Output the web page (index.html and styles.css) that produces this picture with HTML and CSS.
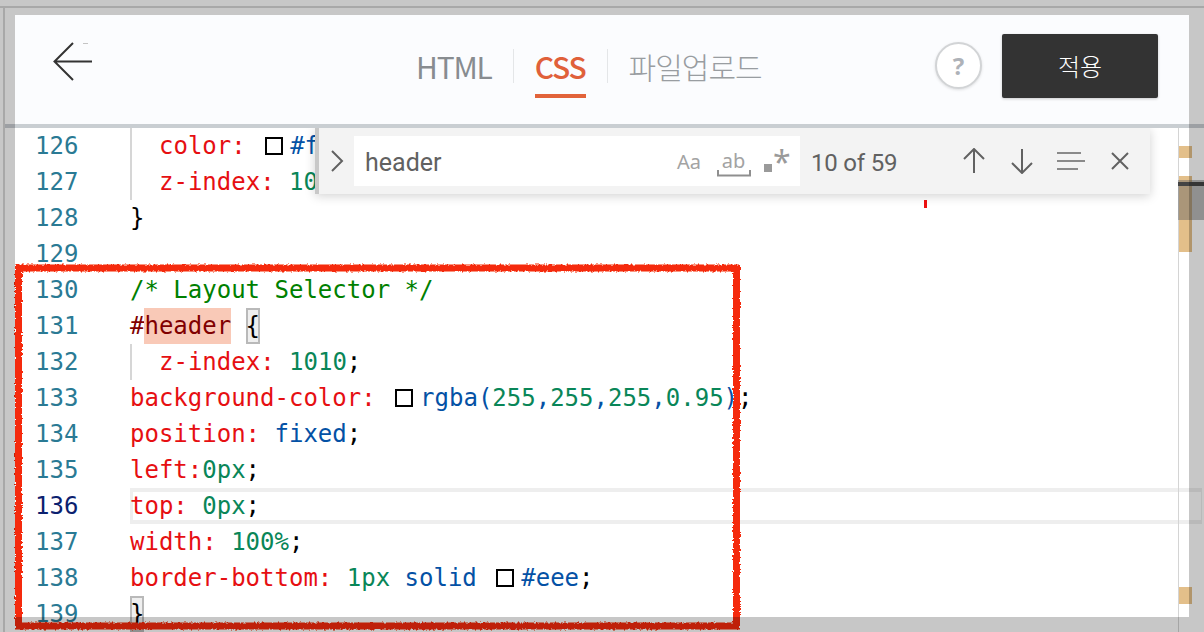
FILE: index.html
```html
<!DOCTYPE html>
<html lang="ko">
<head>
<meta charset="utf-8">
<title>CSS editor</title>
<link rel="stylesheet" href="styles.css">
</head>
<body>
<div class="stage">
  <header class="topbar">
    <button class="back" aria-label="back">
      <svg width="40" height="40" viewBox="0 0 40 40"><path class="back-path" d="M20 1 L1.5 19.5 L20 38 M1.5 19.5 H39"/></svg>
    </button>
    <nav class="tabs">
      <span class="tab">HTML</span>
      <span class="tab-sep"></span>
      <span class="tab tab-active">CSS</span>
      <span class="tab-sep"></span>
      <span class="tab tab-ko">파일업로드</span>
    </nav>
    <div class="actions">
      <span class="help">?</span>
      <button class="apply">적용</button>
    </div>
  </header>

  <main class="editor">
    <div class="row"><span class="ln">126</span><code class="code"><i class="indent"></i><b class="p">color:</b> <i class="swatch"></i><b class="v">#fff</b>;</code></div>
    <div class="row"><span class="ln">127</span><code class="code"><i class="indent"></i><b class="p">z-index:</b> <b class="n">1000</b>;</code></div>
    <div class="row"><span class="ln">128</span><code class="code">}</code></div>
    <div class="row"><span class="ln">129</span><code class="code"></code></div>
    <div class="row"><span class="ln">130</span><code class="code"><b class="c">/* Layout Selector */</b></code></div>
    <div class="row"><span class="ln">131</span><code class="code"><b class="s">#<mark class="hit">header</mark></b> <span class="match">{</span></code></div>
    <div class="row"><span class="ln">132</span><code class="code"><i class="indent"></i><b class="p">z-index:</b> <b class="n">1010</b>;</code></div>
    <div class="row"><span class="ln">133</span><code class="code"><b class="p">background-color:</b> <i class="swatch"></i><b class="v">rgba(<b class="n">255</b>,<b class="n">255</b>,<b class="n">255</b>,<b class="n">0.95</b>)</b>;</code></div>
    <div class="row"><span class="ln">134</span><code class="code"><b class="p">position:</b> <b class="v">fixed</b>;</code></div>
    <div class="row"><span class="ln">135</span><code class="code"><b class="p">left:</b><b class="n">0px</b>;</code></div>
    <div class="row row-current"><span class="ln">136</span><code class="code"><b class="p">top:</b> <b class="n">0px</b>;</code></div>
    <div class="row"><span class="ln">137</span><code class="code"><b class="p">width:</b> <b class="n">100%</b>;</code></div>
    <div class="row"><span class="ln">138</span><code class="code"><b class="p">border-bottom:</b> <b class="n">1px</b> <b class="v">solid</b> <i class="swatch"></i><b class="v">#eee</b>;</code></div>
    <div class="row"><span class="ln">139</span><code class="code"><span class="match match-end">}</span></code></div>
  </main>

  <div class="ruler"></div>
  <div class="mark mark-a"></div>
  <div class="mark mark-b"></div>
  <div class="mark mark-c"></div>
  <div class="slider"></div>
  <div class="cursor-line"></div>
  <div class="tick"></div>

  <svg class="annot" width="1204" height="632" viewBox="0 0 1204 632">
    <defs>
      <filter id="rough" x="-2%" y="-2%" width="104%" height="104%">
        <feTurbulence type="fractalNoise" baseFrequency="0.45" numOctaves="3" seed="4" result="n"/>
        <feDisplacementMap in="SourceGraphic" in2="n" scale="3.5"/>
      </filter>
    </defs>
    <rect class="annot-rect" x="18.5" y="268" width="718" height="358" filter="url(#rough)"/>
  </svg>

  <section class="find">
    <svg class="chev" width="14" height="24" viewBox="0 0 14 24"><path class="ico" d="M2 2 L12 12 L2 22"/></svg>
    <div class="find-input">
      <span class="find-text">header</span>
      <span class="opt opt-aa">Aa</span>
      <span class="opt opt-ab">ab<svg class="ab-b" width="34" height="7" viewBox="0 0 34 7"><path class="ico-light" d="M1 0 V5.5 H33 V0"/></svg></span>
      <span class="opt opt-re"><i class="re-dot"></i><span class="re-star">*</span></span>
    </div>
    <span class="count">10 of 59</span>
    <div class="find-tools">
      <svg width="24" height="26" viewBox="0 0 24 26"><path class="ico" d="M12 25 V1 M2 11 L12 1 L22 11"/></svg>
      <svg width="24" height="26" viewBox="0 0 24 26"><path class="ico" d="M12 1 V25 M2 15 L12 25 L22 15"/></svg>
      <svg width="30" height="20" viewBox="0 0 30 20"><path class="ico-lines" d="M1 2 H25 M1 10 H29 M1 18 H22"/></svg>
      <svg width="20" height="18" viewBox="0 0 20 18"><path class="ico" d="M2 1 L18 17 M18 1 L2 17"/></svg>
    </div>
  </section>

  <div class="frame"></div>
</div>
</body>
</html>
```

FILE: styles.css
```css
* { box-sizing: border-box; }
html, body { margin: 0; padding: 0; }
body { width: 1204px; height: 632px; overflow: hidden; background: #fff; }

.stage {
  position: relative;
  width: 1204px;
  height: 632px;
  overflow: hidden;
  background: #fff;
  padding-top: 15px;
  font-family: "Noto Sans", "Noto Sans CJK KR", sans-serif;
}

/* top bar */
.topbar {
  position: relative;
  z-index: 5;
  display: flex;
  align-items: center;
  height: 109px;
  margin: 0 15px;
  background: #fbfcfe;
}
.topbar::after {
  content: "";
  position: absolute;
  left: -10px;
  right: -15px;
  bottom: -4px;
  height: 4px;
  background: #c9ced2;
}
.back {
  position: relative;
  width: 40px;
  height: 40px;
  margin: 0 0 16px 38px;
  padding: 0;
  border: 0;
  background: none;
  flex: none;
}
.back::after {
  content: "";
  position: absolute;
  left: 30px;
  top: 1px;
  width: 5px;
  height: 1px;
  background: #c4c4c4;
}
.back-path { fill: none; stroke: #333; stroke-width: 2; }
.tabs {
  display: flex;
  align-items: center;
  gap: 21px;
  margin-left: 323px;
  margin-bottom: 7px;
  height: 60px;
  position: relative;
  font-family: "Noto Sans CJK KR", sans-serif;
}
.tab { font-size: 30px; color: #888c90; line-height: 44px; letter-spacing: -1.2px; }
.tab-active {
  position: relative;
  color: #e0603a;
  font-weight: 500;
}
.tab-active::after {
  content: "";
  position: absolute;
  left: 0;
  right: 0;
  bottom: -10px;
  height: 4px;
  background: #e2633a;
}
.tab-ko { font-size: 30px; letter-spacing: -1px; color: #999da1; font-weight: 300; }
.tab-sep { width: 1px; height: 34px; background: #e4e6e8; }
.actions {
  display: flex;
  align-items: center;
  gap: 20px;
  margin-left: auto;
  margin-right: 31px;
  margin-bottom: 8px;
}
.help {
  width: 47px;
  height: 47px;
  display: flex;
  align-items: center;
  justify-content: center;
  border-radius: 50%;
  border: 2px solid #d2d4d6;
  background: #fff;
  box-shadow: 0 1px 3px rgba(0,0,0,.12);
  color: #aeb2b8;
  font-weight: 700;
  font-size: 24px;
}
.apply {
  width: 156px;
  height: 64px;
  border: 0;
  border-radius: 2px;
  background: #333;
  color: #fff;
  font-family: "Noto Sans CJK KR", sans-serif;
  font-size: 24px;
  font-weight: 300;
  box-shadow: 0 1px 3px rgba(0,0,0,.2);
}

/* editor */
.editor {
  margin-top: 4px;
  font-family: "DejaVu Sans Mono", monospace;
  font-size: 24px;
  line-height: 36px;
}
.row { position: relative; display: flex; height: 36px; white-space: pre; }
.ln { width: 130px; padding-left: 35px; color: #2a7a94; flex: none; position: relative; }
.code { font: inherit; color: #000; position: relative; display: block; flex: 1; }
.code b { font-weight: 400; }
.code i { font-style: normal; }
.indent { display: inline-block; width: 29px; height: 36px; vertical-align: top; box-shadow: inset 2px 0 0 #d6d6d6; }
.p { color: #e60f12; }
.n { color: #098658; }
.v { color: #0451a5; }
.c { color: #008000; }
.s { color: #800000; }
.hit { display: inline-block; height: 36px; background: #f9c9b7; color: #800000; }
.match { display: inline-block; height: 36px; background: #efefef; box-shadow: inset 0 0 0 2px #b9b9b9; color: #000; }
.swatch { display: inline-block; width: 18px; height: 18px; margin: 0 7px 0 5px; border: 2px solid #000; background: #fff; vertical-align: -1px; }
.row-current .ln { color: #0b216f; }
.row-current::before {
  content: "";
  position: absolute;
  left: 130px;
  right: 2px;
  top: 0;
  bottom: 0;
  border: 4px solid #eee;
  border-right-width: 1px;
  border-left-width: 3px;
}

/* overview ruler */
.ruler { position: absolute; left: 1178px; top: 128px; bottom: 0; width: 1px; background: #d4d4d4; }
.mark { position: absolute; left: 1179px; width: 13px; background: #e3bf8a; }
.mark-a { top: 146px; height: 12px; }
.mark-b { top: 176px; height: 76px; }
.mark-c { top: 587px; height: 17px; }
.slider { position: absolute; left: 1178px; top: 180px; width: 26px; height: 40px; background: rgba(100,100,100,.45); }
.cursor-line { position: absolute; left: 1178px; top: 182px; width: 26px; height: 4px; background: #444; }
.tick { position: absolute; left: 924px; top: 200px; width: 3px; height: 8px; background: #ee1111; }

/* annotation */
.annot { position: absolute; left: 0; top: 0; }
.annot-rect { fill: none; stroke: #f5290a; stroke-width: 7; }

/* find widget */
.find {
  position: absolute;
  z-index: 4;
  left: 315px;
  top: 128px;
  width: 835px;
  height: 66px;
  display: flex;
  align-items: center;
  background: #f3f3f3;
  border-left: 4px solid #c8c8c8;
  box-shadow: 0 2px 10px rgba(0,0,0,.18);
}
.ico { fill: none; stroke: #616161; stroke-width: 2; }
.ico-light { fill: none; stroke: #8f8f8f; stroke-width: 2; }
.ico-lines { fill: none; stroke: #8a8a8a; stroke-width: 2; }
.chev { margin-left: 11px; margin-right: 10px; flex: none; }
.find-input {
  display: flex;
  align-items: center;
  width: 446px;
  height: 50px;
  padding-left: 11px;
  background: #fff;
}
.find-text { font-family: Roboto, sans-serif; font-size: 25px; color: #616161; width: 312px; padding-top: 2px; }
.opt { color: #a3a3a3; position: relative; }
.opt-aa { font-size: 20px; width: 40px; }
.opt-ab { font-size: 20px; width: 47px; text-align: center; padding-right: 14px; top: -1px; }
.ab-b { position: absolute; left: 0; top: 23px; }
.opt-re { width: 26px; height: 30px; }
.re-dot { position: absolute; left: 0; top: 18px; width: 8px; height: 8px; background: #9a9a9a; }
.re-star { position: absolute; left: 9px; top: -4px; font-size: 32px; line-height: 40px; color: #9a9a9a; }
.count { margin-left: 11px; width: 149px; padding-top: 3px; font-family: Roboto, sans-serif; font-size: 24px; letter-spacing: -0.2px; color: #616161; flex: none; }
.find-tools { display: flex; align-items: center; gap: 25px; margin-left: 2px; }
.find-tools svg:nth-child(2) { margin-left: -1px; }
.find-tools svg:nth-child(3) { margin-left: -3px; }
.find-tools svg:nth-child(4) { margin-left: -1px; }

/* outer dimmed frame */
.frame {
  position: absolute;
  z-index: 6;
  inset: 0;
  border: 15px solid rgba(0,0,0,.22);
  pointer-events: none;
}
.frame::before {
  content: "";
  position: absolute;
  left: -15px;
  right: -15px;
  top: -9px;
  height: 2px;
  background: #a8a8a8;
}
.frame::after {
  content: "";
  position: absolute;
  left: -12px;
  top: -7px;
  bottom: -15px;
  width: 2px;
  background: #a8a8a8;
}
```
